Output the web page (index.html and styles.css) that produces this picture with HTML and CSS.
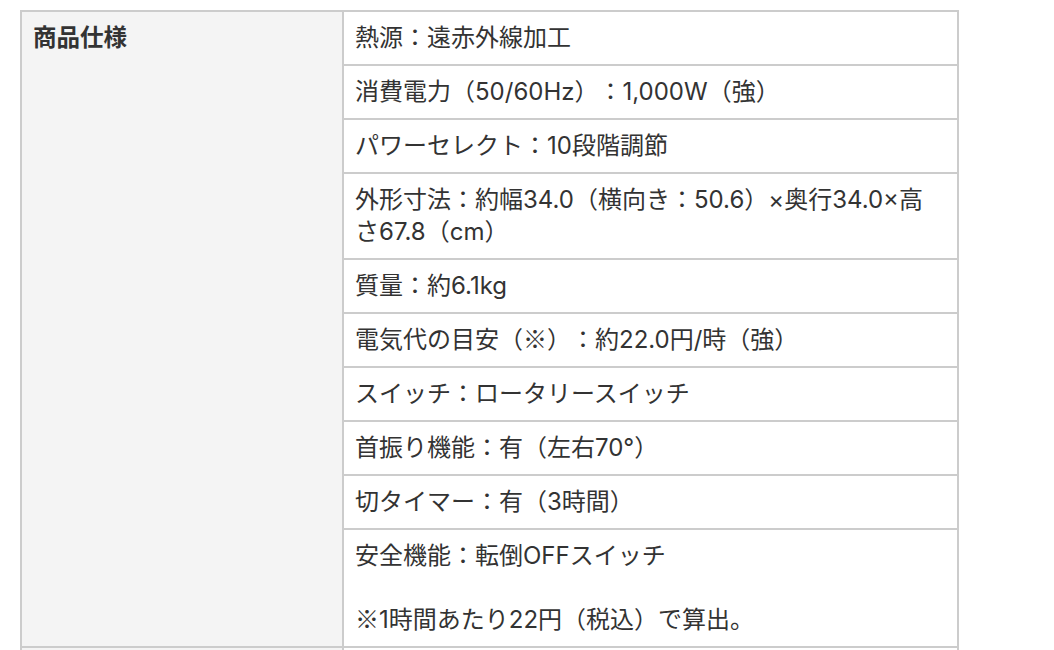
FILE: index.html
```html
<!DOCTYPE html>
<html lang="ja">
<head>
<meta charset="utf-8">
<title>商品仕様</title>
<link rel="stylesheet" href="styles.css">
</head>
<body>
<div class="page">
<table class="spec">
  <tr>
    <th rowspan="10">商品仕様</th>
    <td>熱源：遠赤外線加工</td>
  </tr>
  <tr><td>消費電力（50/60Hz）：1,000W（強）</td></tr>
  <tr><td>パワーセレクト：10段階調節</td></tr>
  <tr><td>外形寸法：約幅34.0（横向き：50.6）×奥行34.0×高さ67.8（cm）</td></tr>
  <tr><td>質量：約6.1kg</td></tr>
  <tr><td>電気代の目安（<span class="cjk">※</span>）：約22.0円/時（強）</td></tr>
  <tr><td>スイッチ：ロータリースイッチ</td></tr>
  <tr><td>首振り機能：有（左右70°）</td></tr>
  <tr><td>切タイマー：有（3時間）</td></tr>
  <tr><td>安全機能：転倒OFFスイッチ<br><br><span class="cjk">※</span>1時間あたり22円（税込）で算出。</td></tr>
  <tr class="next"><th></th><td></td></tr>
</table>
</div>
</body>
</html>
```

FILE: styles.css
```css
html, body {
  margin: 0;
  padding: 0;
  background: #fff;
}
.page {
  padding: 10px 0 0 20px;
}
.spec {
  border-collapse: separate;
  border-spacing: 0;
  width: 939px;
  border-top: 2px solid #ccc;
  border-left: 2px solid #ccc;
  font-family: "Inter", "Noto Sans CJK JP", sans-serif;
  font-size: 24px;
  line-height: 32px;
  color: #333;
  text-spacing-trim: space-all;
}
.spec th,
.spec td {
  border-right: 2px solid #ccc;
  border-bottom: 2px solid #ccc;
  padding: 10px 14px 10px 11px;
  vertical-align: top;
  text-align: left;
}
.spec th {
  width: 295px;
  background: #f4f4f4;
  font-weight: bold;
  font-size: 23.5px;
}
.spec td {
  background: #fff;
}
.spec .cjk {
  font-family: "Noto Sans CJK JP", sans-serif;
  line-height: 1;
}
.spec .next th,
.spec .next td {
  height: 52px;
}
```
